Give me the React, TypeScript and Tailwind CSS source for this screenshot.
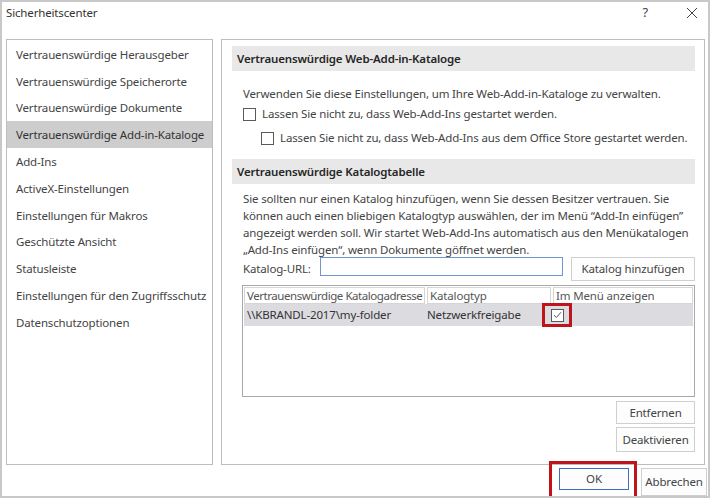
import React from 'react';

const navItems = [
  'Vertrauenswürdige Herausgeber',
  'Vertrauenswürdige Speicherorte',
  'Vertrauenswürdige Dokumente',
  'Vertrauenswürdige Add-in-Kataloge',
  'Add-Ins',
  'ActiveX-Einstellungen',
  'Einstellungen für Makros',
  'Geschützte Ansicht',
  'Statusleiste',
  'Einstellungen für den Zugriffsschutz',
  'Datenschutzoptionen',
];

const Checkbox: React.FC<{ checked?: boolean }> = ({ checked }) => (
  <span className="inline-flex w-[13px] h-[13px] shrink-0 items-center justify-center border border-[#5a5a5a] bg-white">
    {checked && (
      <svg width="9" height="8" viewBox="0 0 9 8">
        <path d="M1 4.2 L3.4 6.5 L8 1.2" fill="none" stroke="#5a5a5a" strokeWidth="1" />
      </svg>
    )}
  </span>
);

const SectionHeader: React.FC<{ title: string }> = ({ title }) => (
  <div className="h-[25px] bg-[#e8e8e8] flex items-center pl-[5px] font-semibold text-[#262626]">{title}</div>
);

const Button: React.FC<{ label: string; className?: string }> = ({ label, className = '' }) => (
  <button className={`h-[24px] bg-[#fdfdfd] border border-[#cfcfcf] text-[#444] flex items-center justify-center whitespace-nowrap ${className}`}>
    {label}
  </button>
);

export default function App() {
  return (
    <div
      className="w-[710px] h-[498px] bg-white border-2 border-[#c8c8c8] text-[11.5px] tracking-[-0.15px] text-[#444] flex flex-col overflow-hidden"
      style={{ fontFamily: '"Segoe UI", "Noto Sans", sans-serif' }}
    >
      {/* Title bar */}
      <div className="h-[23px] flex items-center pl-[4px] pr-[10px]">
        <span className="text-[#333]">Sicherheitscenter</span>
        <span className="ml-auto text-[13px] text-[#444] mr-[38px]">?</span>
        <svg width="12" height="12" viewBox="0 0 12 12">
          <path d="M1 1 L11 11 M11 1 L1 11" stroke="#444" strokeWidth="1" />
        </svg>
      </div>

      {/* Body */}
      <div className="flex gap-[8px] mt-[15px] pl-[4px]">
        {/* Left nav */}
        <div className="w-[207px] h-[426px] border border-[#bdbdbd] pt-[1px]">
          {navItems.map((item, i) => (
            <div
              key={item}
              className={`h-[26.8px] flex items-center pl-[9px] whitespace-nowrap ${i === 3 ? 'bg-[#cdcdcd] text-[#333]' : ''}`}
            >
              {item}
            </div>
          ))}
        </div>

        {/* Right panel */}
        <div className="w-[484px] h-[426px] border border-[#bdbdbd] pl-[10px] pr-[9px] pt-[6px] flex flex-col">
          <SectionHeader title="Vertrauenswürdige Web-Add-in-Kataloge" />
          <div className="pl-[11px] mt-[14px] leading-[17px] whitespace-nowrap">
            Verwenden Sie diese Einstellungen, um Ihre Web-Add-in-Kataloge zu verwalten.
          </div>
          <div className="pl-[11px] mt-[2px] h-[20px] flex items-center gap-[6px] whitespace-nowrap">
            <Checkbox />
            <span>Lassen Sie nicht zu, dass Web-Add-Ins gestartet werden.</span>
          </div>
          <div className="pl-[29px] mt-[4px] h-[20px] flex items-center gap-[6px] whitespace-nowrap">
            <Checkbox />
            <span>Lassen Sie nicht zu, dass Web-Add-Ins aus dem Office Store gestartet werden.</span>
          </div>

          <div className="mt-[11px]">
            <SectionHeader title="Vertrauenswürdige Katalogtabelle" />
          </div>
          <div className="pl-[11px] mt-[6px] leading-[17px] whitespace-nowrap">
            Sie sollten nur einen Katalog hinzufügen, wenn Sie dessen Besitzer vertrauen. Sie
            <br />
            können auch einen bliebigen Katalogtyp auswählen, der im Menü “Add-In einfügen”
            <br />
            angezeigt werden soll. Wir startet Web-Add-Ins automatisch aus den Menükatalogen
            <br />
            „Add-Ins einfügen“, wenn Dokumente göffnet werden.
          </div>

          <div className="flex items-start mt-[-1px] pl-[11px]">
            <span className="mt-[3px] w-[77px]">Katalog-URL:</span>
            <div className="w-[243px] h-[19px] border border-[#6f96cf] bg-white" />
            <Button label="Katalog hinzufügen" className="ml-[8px] w-[124px] !h-[24px]" />
          </div>

          {/* Table */}
          <div className="mt-[4px] ml-[10px] h-[112px] border border-[#a8a8a8] bg-white p-[1px]">
            <div className="flex h-[17px] leading-[15px] text-[#555]">
              <div className="w-[181px] border border-[#d6d6d6] pl-[2px] whitespace-nowrap overflow-hidden tracking-[-0.45px]">
                Vertrauenswürdige Katalogadresse
              </div>
              <div className="w-[124px] ml-[2px] border border-[#d6d6d6] pl-[2px]">Katalogtyp</div>
              <div className="flex-1 ml-[2px] border border-[#d6d6d6] pl-[2px]">Im Menü anzeigen</div>
            </div>
            <div className="flex items-center h-[22px] bg-[#dcdce0] text-[#333]">
              <div className="w-[181px] pl-[3px]">\\KBRANDL-2017\my-folder</div>
              <div className="w-[126px] pl-[2px]">Netzwerkfreigabe</div>
              <div className="relative flex items-center">
                <Checkbox checked />
                <span className="absolute left-[-9px] right-[-8px] top-[-6px] bottom-[-5px] border-[3px] border-[#c0141c]" />
              </div>
            </div>
          </div>

          <div className="flex flex-col items-end gap-[3px] mt-[4px]">
            <Button label="Entfernen" className="w-[79px] !h-[23px]" />
            <Button label="Deaktivieren" className="w-[79px] !h-[25px]" />
          </div>
        </div>
      </div>

      {/* Footer */}
      <div className="flex justify-end gap-[12px] mt-[3px] pr-[1px]">
        <div className="relative">
          <Button label="OK" className="w-[70px] !h-[22px] !border-[#3c6fc4]" />
          <span className="absolute left-[-10px] right-[-8px] top-[-7px] bottom-[-5px] border-[3px] border-[#c0141c]" />
        </div>
        <Button label="Abbrechen" className="w-[66px] !h-[28px]" />
      </div>
    </div>
  );
}
